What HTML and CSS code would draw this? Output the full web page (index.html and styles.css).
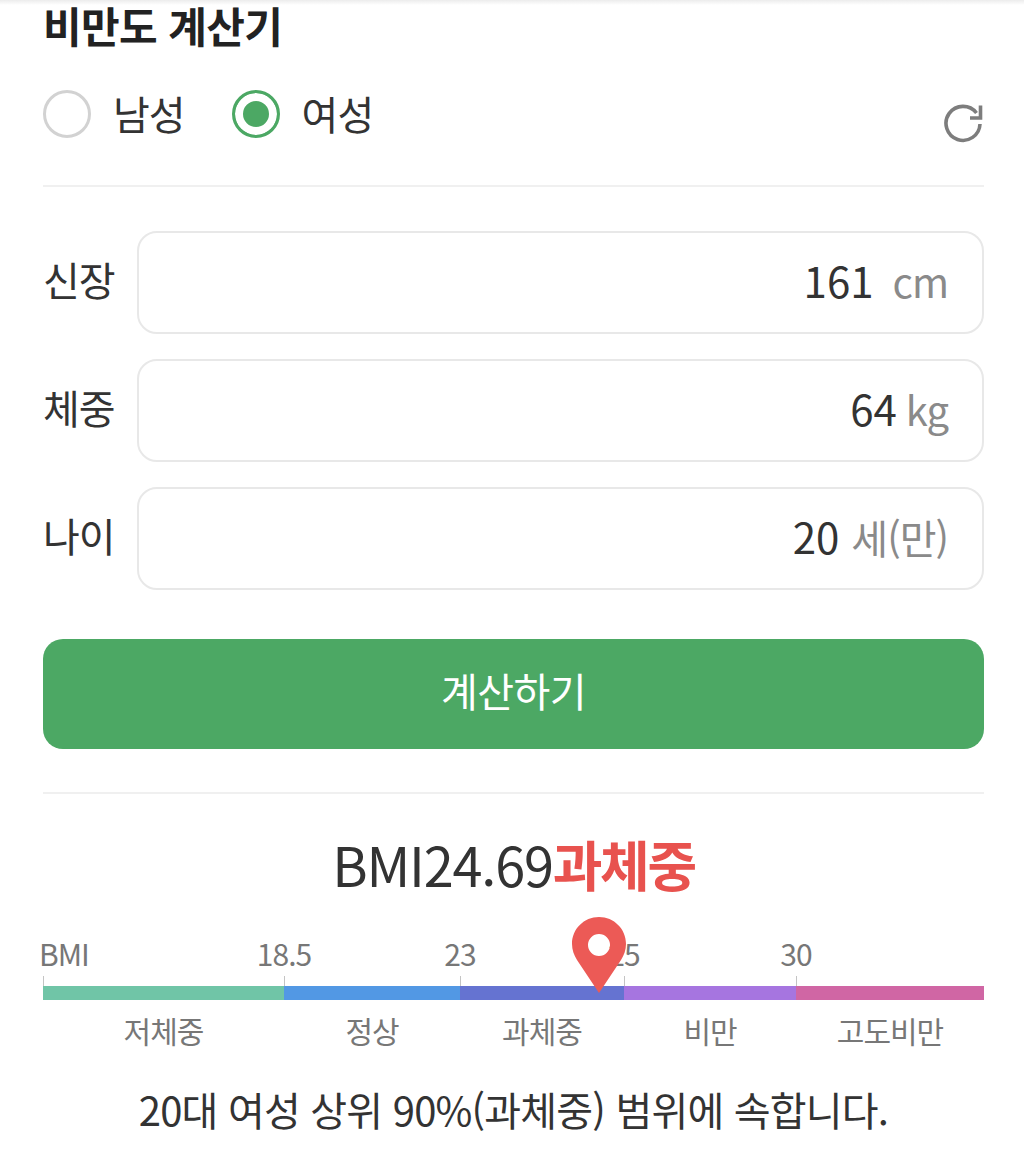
FILE: index.html
```html
<!DOCTYPE html>
<html lang="ko">
<head>
    <meta charset="UTF-8">
    <meta name="viewport" content="width=device-width, initial-scale=1.0">
    <title>비만도 계산기</title>
    <link rel="stylesheet" href="styles.css">
</head>
<body>
    <div class="top-shadow"></div>
    <div class="calc">
        <h1 class="calc-title">비만도 계산기</h1>

        <div class="gender-row">
            <label class="radio-option">
                <span class="radio-mark"></span>
                <span class="radio-text">남성</span>
            </label>
            <label class="radio-option">
                <span class="radio-mark checked"></span>
                <span class="radio-text">여성</span>
            </label>
            <svg class="reset-icon" xmlns="http://www.w3.org/2000/svg" viewBox="0 0 40 40" fill="none" stroke="#7d7d7d" stroke-width="3.600">
                <path d="M37 20A17 17 0 1 1 33.500 9"></path>
                <path d="M37.500 1.500V14H27"></path>
            </svg>
        </div>

        <div class="form-fields">
            <div class="form-group">
                <label>신장</label>
                <div class="input-box"><span class="value">161</span><span class="unit unit-cm">cm</span></div>
            </div>
            <div class="form-group">
                <label>체중</label>
                <div class="input-box"><span class="value">64</span><span class="unit unit-kg">kg</span></div>
            </div>
            <div class="form-group">
                <label>나이</label>
                <div class="input-box"><span class="value">20</span><span class="unit">세(만)</span></div>
            </div>
        </div>

        <button class="calc-button" type="button">계산하기</button>

        <div class="result">
            <div class="result-title">BMI24.69<strong>과체중</strong></div>

            <div class="scale">
                <div class="scale-ticks">
                    <div class="tick tick-under"><span>BMI</span></div>
                    <div class="tick tick-normal"><span>18.5</span></div>
                    <div class="tick tick-over"><span>23</span></div>
                    <div class="tick tick-obese"><span>25</span></div>
                    <div class="tick tick-severe"><span>30</span></div>
                </div>
                <div class="scale-bar">
                    <div class="tick-under seg-under"></div>
                    <div class="tick-normal seg-normal"></div>
                    <div class="tick-over seg-over"></div>
                    <div class="tick-obese seg-obese"></div>
                    <div class="tick-severe seg-severe"></div>
                </div>
                <div class="scale-names">
                    <div class="tick-under">저체중</div>
                    <div class="tick-normal">정상</div>
                    <div class="tick-over">과체중</div>
                    <div class="tick-obese">비만</div>
                    <div class="tick-severe">고도비만</div>
                </div>
                <svg class="pin" xmlns="http://www.w3.org/2000/svg" viewBox="0 0 54 76">
                    <path fill="#ec5a56" fill-rule="evenodd" d="M27 0C12 0 0 12 0 27c0 6 2 11 5 16l22 33 22-33c3-5 5-10 5-16C54 12 42 0 27 0zm0 17a11 11 0 1 1 0 22 11 11 0 0 1 0-22z"></path>
                </svg>
            </div>

            <p class="result-note">20대 여성 상위 90%(과체중) 범위에 속합니다.</p>
        </div>
    </div>
</body>
</html>
```

FILE: styles.css
```css
* {
    margin: 0;
    padding: 0;
    box-sizing: border-box;
    font-family: "Noto Sans CJK KR", "Noto Sans", sans-serif;
}

body {
    background: white;
    color: #333;
}

.top-shadow {
    height: 5px;
    background: linear-gradient(#ececec, #fff);
}

.calc {
    padding: 0 40px 0 43px;
}

.calc-title {
    font-size: 42px;
    line-height: 40px;
    letter-spacing: -0.6px;
    font-weight: 700;
    color: #222;
}

.gender-row {
    display: flex;
    align-items: center;
    height: 142px;
    padding-bottom: 2px;
    border-bottom: 2px solid #f0f0f0;
    gap: 47px;
}

.radio-option {
    display: flex;
    align-items: center;
    gap: 22px;
    font-size: 40px;
    letter-spacing: -1px;
}

.radio-text {
    padding-bottom: 3px;
}

.radio-mark {
    width: 48px;
    height: 48px;
    border-radius: 50%;
    border: 3px solid #d2d2d2;
}

.radio-mark.checked {
    border-color: #4ca864;
    background: #4ca864;
    box-shadow: inset 0 0 0 8px white;
}

.reset-icon {
    width: 40px;
    height: 40px;
    margin-left: auto;
    margin-right: 1px;
    margin-top: 20px;
}

.form-fields {
    display: flex;
    flex-direction: column;
    gap: 25px;
    margin-top: 44px;
}

.form-group {
    display: flex;
    align-items: center;
}

.form-group label {
    width: 94px;
    font-size: 40px;
    letter-spacing: -1px;
    padding-bottom: 7px;
}

.input-box {
    flex: 1;
    height: 103px;
    display: flex;
    align-items: center;
    justify-content: flex-end;
    gap: 12px;
    padding-right: 34px;
    padding-bottom: 6px;
    border: 2px solid #e8e8e8;
    border-radius: 20px;
    font-size: 42px;
}

.unit {
    padding-top: 3px;
    color: #8a8a8a;
    font-size: 40px;
    letter-spacing: -1px;
}

.unit-cm {
    margin-left: 7px;
}

.unit-kg {
    margin-left: -3px;
}

.calc-button {
    display: block;
    width: 100%;
    height: 110px;
    margin-top: 49px;
    padding-bottom: 8px;
    border: none;
    border-radius: 20px;
    background-color: #4ca864;
    color: white;
    font-size: 40px;
    letter-spacing: -0.5px;
}

.result {
    margin-top: 43px;
    border-top: 2px solid #f0f0f0;
}

.result-title {
    margin-top: 34px;
    text-align: center;
    font-size: 54px;
    line-height: 72px;
    letter-spacing: -1.2px;
}

.result-title strong {
    color: #e8524e;
    font-weight: 700;
    letter-spacing: -2.300px;
}

.scale {
    position: relative;
    margin-top: 17px;
}

.scale-ticks, .scale-bar, .scale-names {
    display: flex;
}

.tick-under { width: 241px; }
.tick-normal { width: 176px; }
.tick-over { width: 164px; }
.tick-obese { width: 172px; }
.tick-severe { width: 188px; }

.tick {
    height: 69px;
    padding-top: 14px;
    background: linear-gradient(#c4c4c4, #c4c4c4) left bottom / 1px 10px no-repeat;
    font-size: 30px;
    line-height: 44px;
    color: #777;
    letter-spacing: -1px;
}

.tick span {
    display: inline-block;
    transform: translateX(-50%);
}

.tick-under span {
    transform: translateX(-4px);
}

.scale-bar {
    height: 14px;
}

.seg-under { background: #70c5a7; }
.seg-normal { background: #5298e4; }
.seg-over { background: #6573d1; }
.seg-obese { background: #a675e0; }
.seg-severe { background: #d066a4; }

.scale-names {
    margin-top: 10px;
    font-size: 30px;
    line-height: 40px;
    text-align: center;
    color: #777;
    letter-spacing: -1px;
}

.pin {
    position: absolute;
    left: 529px;
    top: 0;
    width: 54px;
    height: 76px;
}

.result-note {
    margin-top: 30px;
    text-align: center;
    font-size: 40px;
    letter-spacing: -0.8px;
    color: #333;
}
```
